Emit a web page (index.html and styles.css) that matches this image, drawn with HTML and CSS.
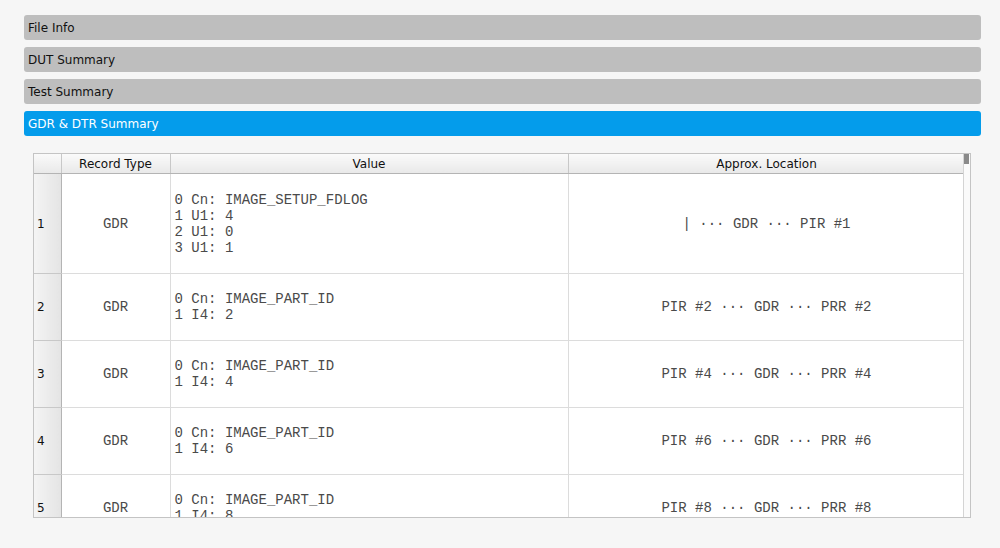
FILE: index.html
```html
<!DOCTYPE html>
<html>
<head>
<meta charset="utf-8">
<link rel="stylesheet" href="styles.css">
</head>
<body>
<div class="page">
  <div class="tabs">
    <div class="tab">File Info</div>
    <div class="tab">DUT Summary</div>
    <div class="tab">Test Summary</div>
    <div class="tab active">GDR &amp; DTR Summary</div>
  </div>
  <div class="panel">
    <div class="frame">
      <div class="viewport">
        <table class="grid">
          <colgroup>
            <col class="c-num"><col class="c-type"><col class="c-val"><col class="c-loc">
          </colgroup>
          <thead>
            <tr><th class="corner"></th><th>Record Type</th><th>Value</th><th>Approx. Location</th></tr>
          </thead>
          <tbody>
            <tr class="r-big">
              <td class="num">1</td><td class="mono center">GDR</td>
              <td class="mono">0 Cn: IMAGE_SETUP_FDLOG<br>1 U1: 4<br>2 U1: 0<br>3 U1: 1</td>
              <td class="mono center">| ··· GDR ··· PIR #1</td>
            </tr>
            <tr>
              <td class="num">2</td><td class="mono center">GDR</td>
              <td class="mono">0 Cn: IMAGE_PART_ID<br>1 I4: 2</td>
              <td class="mono center">PIR #2 ··· GDR ··· PRR #2</td>
            </tr>
            <tr>
              <td class="num">3</td><td class="mono center">GDR</td>
              <td class="mono">0 Cn: IMAGE_PART_ID<br>1 I4: 4</td>
              <td class="mono center">PIR #4 ··· GDR ··· PRR #4</td>
            </tr>
            <tr>
              <td class="num">4</td><td class="mono center">GDR</td>
              <td class="mono">0 Cn: IMAGE_PART_ID<br>1 I4: 6</td>
              <td class="mono center">PIR #6 ··· GDR ··· PRR #6</td>
            </tr>
            <tr>
              <td class="num">5</td><td class="mono center">GDR</td>
              <td class="mono">0 Cn: IMAGE_PART_ID<br>1 I4: 8</td>
              <td class="mono center">PIR #8 ··· GDR ··· PRR #8</td>
            </tr>
          </tbody>
        </table>
      </div>
      <div class="scrollbar"><div class="thumb"></div></div>
    </div>
  </div>
</div>
</body>
</html>
```
FILE: styles.css
```css
html, body {
  margin: 0;
  padding: 0;
  background: #f6f6f6;
}
body {
  font-family: "DejaVu Sans", Verdana, sans-serif;
  font-size: 12px;
  color: #111;
}
.page {
  padding: 15px 19px 0 24px;
}
.tabs {
  display: flex;
  flex-direction: column;
  gap: 7px;
}
.tab {
  height: 25px;
  line-height: 27px;
  padding-left: 4px;
  background: #bebebe;
  border-radius: 3px;
  color: #111;
}
.tab.active {
  background: #049ceb;
  color: #fff;
}
.panel {
  padding: 17px 10px 0 9px;
}
.frame {
  display: flex;
  height: 363px;
  border: 1px solid #c4c4c4;
  background: #fff;
  overflow: hidden;
}
.viewport {
  width: 931px;
  overflow: hidden;
}
.grid {
  table-layout: fixed;
  border-collapse: collapse;
  width: 931px;
}
.c-num { width: 27px; }
.c-type { width: 109px; }
.c-val { width: 398px; }
.c-loc { width: 397px; }
th {
  height: 18px;
  padding: 1px 0 0;
  font-weight: normal;
  font-size: 12px;
  color: #111;
  text-align: center;
  background: linear-gradient(#fafafa, #e9e9e9);
  border-right: 1px solid #c8c8c8;
  border-bottom: 1px solid #b4b4b4;
}
td {
  height: 66px;
  padding: 0 0 0 4px;
  border-right: 1px solid #dcdcdc;
  border-bottom: 1px solid #dcdcdc;
  vertical-align: middle;
}
.r-big td {
  height: 99px;
}
td.num {
  padding-left: 3px;
  background: linear-gradient(90deg, #f4f4f4, #e4e4e4);
  border-right: 1px solid #b4b4b4;
  border-bottom: 1px solid #c8c8c8;
  font-size: 12px;
  color: #111;
}
.mono {
  font-family: "Courier New", "Nimbus Mono PS", "FreeMono", "Liberation Mono", monospace;
  font-size: 14px;
  line-height: 16px;
  color: #4a4a4a;
}
.center {
  text-align: center;
  padding-left: 0;
}
.scrollbar {
  width: 6px;
  border-left: 1px solid #d4d4d4;
  background: #fafafa;
}
.thumb {
  margin: 0 1px 0 0;
  height: 10px;
  background: #8a8a8a;
}
```
